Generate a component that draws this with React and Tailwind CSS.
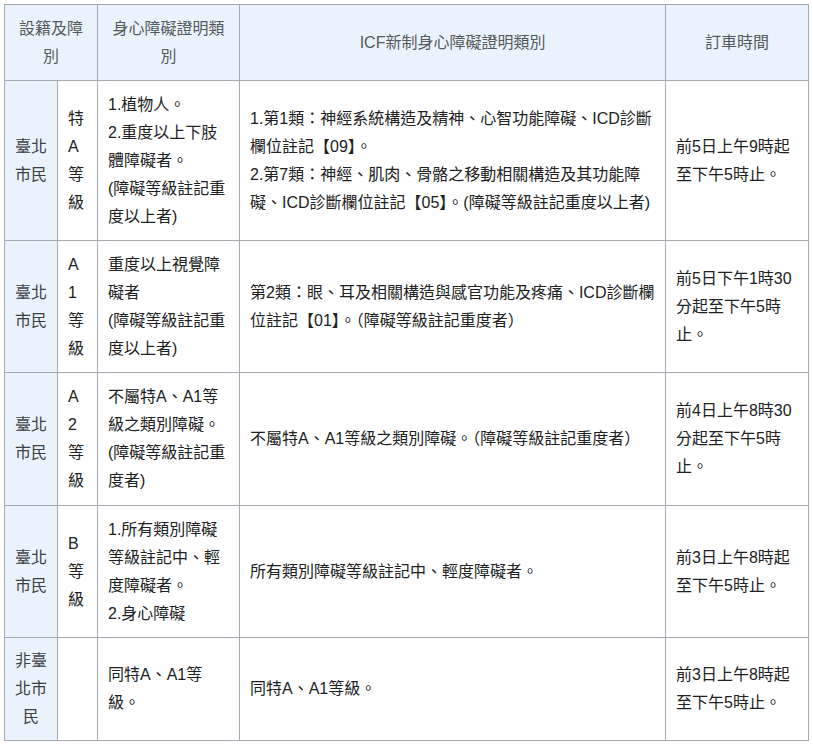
export default function App() {
  const td = "border border-[#a2a9b1] px-[10px] py-[6px] align-middle";
  const first = td + " bg-[#eaf3fb] text-[#3b4046] text-center";
  const rows = [
    { h: 160, city: "臺北市民", lv: "特A等級", a: ["1.植物人。", "2.重度以上下肢體障礙者。", "(障礙等級註記重度以上者)"], b: ["1.第1類：神經系統構造及精神、心智功能障礙、ICD診斷欄位註記【09】。", "2.第7類：神經、肌肉、骨骼之移動相關構造及其功能障礙、ICD診斷欄位註記【05】。(障礙等級註記重度以上者)"], t: "前5日上午9時起至下午5時止。" },
    { h: 132, city: "臺北市民", lv: "A1等級", a: ["重度以上視覺障礙者", "(障礙等級註記重度以上者)"], b: ["第2類：眼、耳及相關構造與感官功能及疼痛、ICD診斷欄位註記【01】。（障礙等級註記重度者）"], t: "前5日下午1時30分起至下午5時止。" },
    { h: 133, city: "臺北市民", lv: "A2等級", a: ["不屬特A、A1等級之類別障礙。", "(障礙等級註記重度者)"], b: ["不屬特A、A1等級之類別障礙。（障礙等級註記重度者）"], t: "前4日上午8時30分起至下午5時止。" },
    { h: 132, city: "臺北市民", lv: "B等級", a: ["1.所有類別障礙等級註記中、輕度障礙者。", "2.身心障礙"], b: ["所有類別障礙等級註記中、輕度障礙者。"], t: "前3日上午8時起至下午5時止。" },
    { h: 103, city: "非臺北市民", lv: "", a: ["同特A、A1等級。"], b: ["同特A、A1等級。"], t: "前3日上午8時起至下午5時止。" },
  ];
  return (
    <div className="bg-white p-[4px] w-[813px] h-[744px] text-[16px] leading-[28px] text-[#202122]" style={{ fontFamily: '"Liberation Sans", "Noto Sans CJK TC", sans-serif' }}>
      <table className="table-fixed border-collapse w-[804px]">
        <colgroup>
          <col className="w-[53px]" />
          <col className="w-[40px]" />
          <col className="w-[142px]" />
          <col className="w-[426px]" />
          <col className="w-[143px]" />
        </colgroup>
        <thead>
          <tr className="h-[76px]">
            <th colSpan={2} className={first + " font-normal text-[#54595d]"}>設籍及障別</th>
            <th className={first + " font-normal text-[#54595d]"}>身心障礙證明類別</th>
            <th className={first + " font-normal text-[#54595d]"}>ICF新制身心障礙證明類別</th>
            <th className={first + " font-normal text-[#54595d]"}>訂車時間</th>
          </tr>
        </thead>
        <tbody>
          {rows.map((r, i) => (
            <tr key={i} style={{ height: r.h }}>
              <td className={first}>{r.city}</td>
              <td className={td + " break-all"}>{r.lv}</td>
              <td className={td}>{r.a.map((x, j) => <div key={j}>{x}</div>)}</td>
              <td className={td}>{r.b.map((x, j) => <div key={j}>{x}</div>)}</td>
              <td className={td}>{r.t}</td>
            </tr>
          ))}
        </tbody>
      </table>
    </div>
  );
}
